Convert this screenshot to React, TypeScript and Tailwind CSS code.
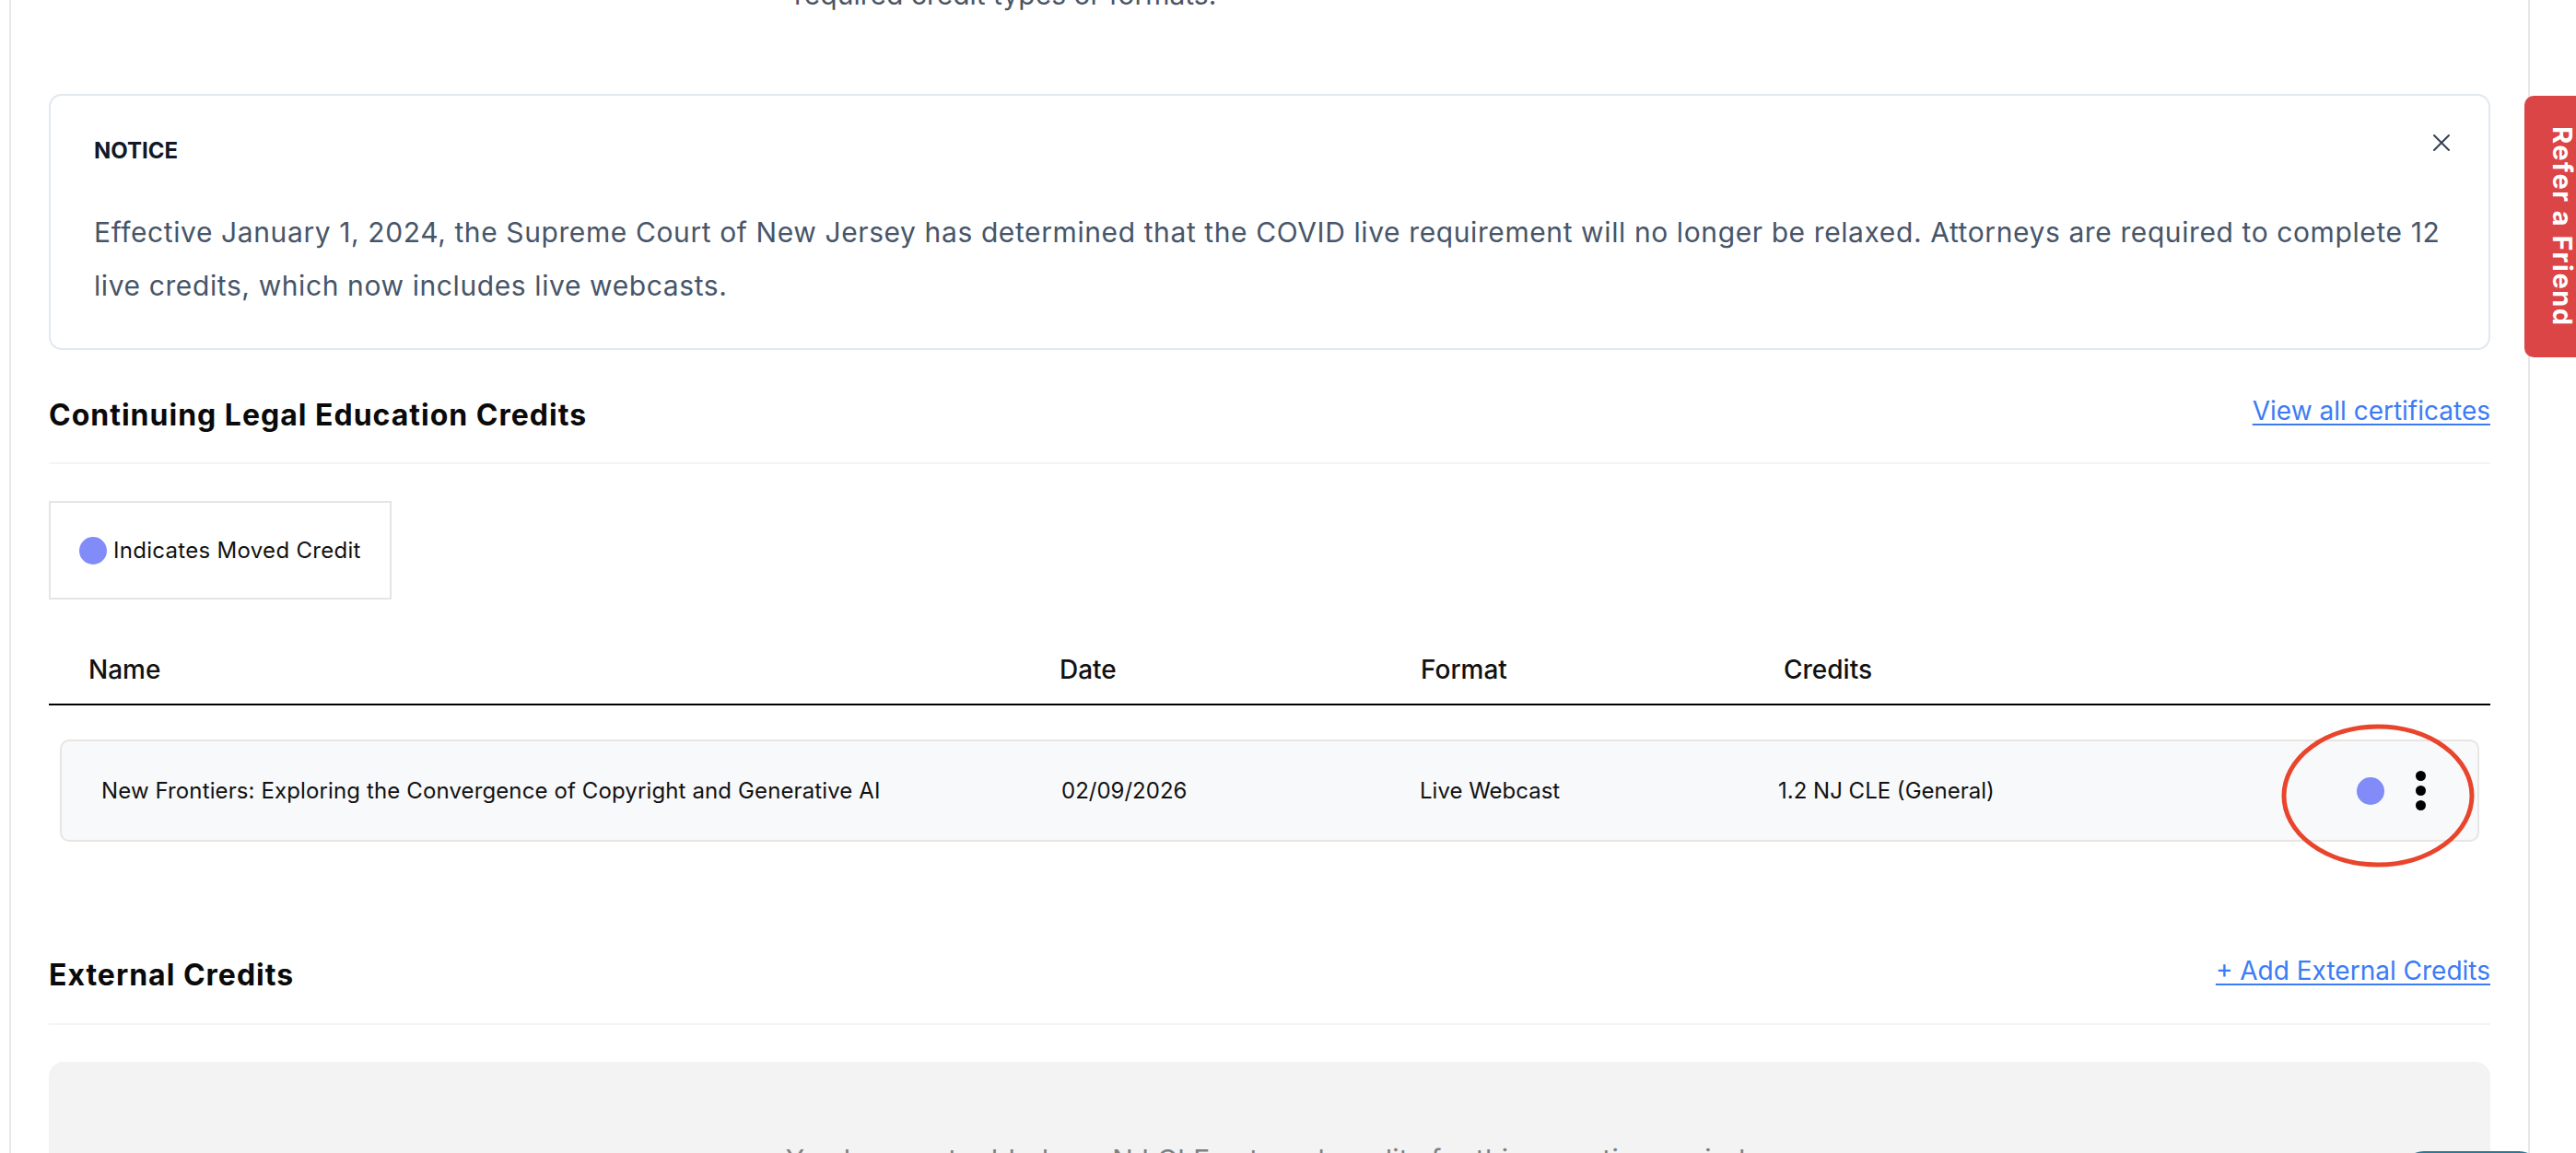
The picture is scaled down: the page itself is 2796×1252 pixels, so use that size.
function CloseIcon() {
  return (
    <svg width="20" height="20" viewBox="0 0 20 20" fill="none" stroke="#334155" strokeWidth="2" strokeLinecap="round">
      <path d="M2 2L18 18M18 2L2 18" />
    </svg>
  );
}

function SectionHeader({ title, link }: { title: string; link: string }) {
  return (
    <div className="flex items-start justify-between">
      <h2 className="text-[32px] font-bold leading-[40px] tracking-[1px] text-[#0a0a0a]">{title}</h2>
      <a
        href="#"
        className="text-[28px] leading-[30px] text-[#3b7cf6] underline decoration-2 underline-offset-[4px]"
      >
        {link}
      </a>
    </div>
  );
}

export default function App() {
  return (
    <div className="relative h-[1252px] w-full overflow-hidden bg-white font-[Inter,sans-serif]">
      <div className="ml-[10px] w-[2736px] border-x-2 border-[#e5e7eb] px-[41px]">
        <div className="h-[12px] overflow-hidden">
          <p className="-mt-[24px] pl-[809px] text-[30px] leading-[36px] text-[#4b5563]">
            required credit types or formats.
          </p>
        </div>

        <section className="mt-[90px] rounded-[14px] border-2 border-[#e2e8f0] pb-[39px] pl-[47px] pr-[41px] pt-[44px]">
          <div className="flex items-start justify-between">
            <p className="text-[24px] font-bold leading-[32px] text-[#111827]">NOTICE</p>
            <button type="button" className="-mt-[3px]">
              <CloseIcon />
            </button>
          </div>
          <p className="mt-[43px] text-[30px] leading-[58px] tracking-[0.6px] text-[#475569]">
            Effective January 1, 2024, the Supreme Court of New Jersey has determined that the COVID live
            requirement will no longer be relaxed. Attorneys are required to complete 12
            <br />
            live credits, which now includes live webcasts.
          </p>
        </section>

        <div className="mt-[51px]">
          <SectionHeader title="Continuing Legal Education Credits" link="View all certificates" />
        </div>
        <div className="mt-[31px] h-[2px] bg-[#f3f4f6]" />

        <div className="mt-[40px] flex h-[107px] w-fit items-center gap-[7px] border-2 border-[#e7e5e4] px-[31px]">
          <span className="h-[30px] w-[30px] rounded-full bg-[#818cf8]" />
          <span className="text-[24px] leading-[32px] tracking-[0.3px] text-[#111]">Indicates Moved Credit</span>
        </div>

        <div className="mt-[58px] grid grid-cols-[1054px_392px_394px_1fr] border-b-2 border-black pb-[19px] pl-[43px] text-[28px] font-medium leading-[36px] text-[#111]">
          <span>Name</span>
          <span>Date</span>
          <span>Format</span>
          <span>Credits</span>
        </div>

        <div className="relative mx-[12px] mt-[37px] flex h-[111px] items-center rounded-[10px] border-2 border-[#e8e5e3] bg-[#f8f9fb] pl-[43px] pr-[56px] text-[24px] leading-[32px] text-[#111]">
          <span className="w-[1042px] tracking-[0.12px]">
            New Frontiers: Exploring the Convergence of Copyright and Generative AI
          </span>
          <span className="w-[389px]">02/09/2026</span>
          <span className="w-[389px]">Live Webcast</span>
          <span className="flex-1">1.2 NJ CLE (General)</span>
          <span className="h-[30px] w-[30px] rounded-full bg-[#818cf8]" />
          <button type="button" className="ml-[34px] flex flex-col gap-[5px]">
            <span className="h-[11px] w-[11px] rounded-full bg-black" />
            <span className="h-[11px] w-[11px] rounded-full bg-black" />
            <span className="h-[11px] w-[11px] rounded-full bg-black" />
          </button>
          <svg
            className="absolute left-[2408px] top-[-20px]"
            width="212"
            height="160"
            viewBox="0 0 212 160"
            fill="none"
          >
            <ellipse cx="106" cy="79" rx="102" ry="75" stroke="#e8452c" strokeWidth="5" />
          </svg>
        </div>

        <div className="mt-[125px]">
          <SectionHeader title="External Credits" link="+ Add External Credits" />
        </div>
        <div className="mt-[32px] h-[2px] bg-[#f3f4f6]" />

        <div className="mt-[40px] h-[300px] rounded-t-[16px] bg-[#f3f3f3] pt-[86px] text-center text-[30px] leading-[40px] tracking-[0.2px] text-[#808080]">
          You have not added any NJ CLE external credits for this reporting period.
        </div>
      </div>

      <div className="absolute left-[2740px] top-[104px] flex h-[284px] w-[82px] items-center justify-center rounded-l-[10px] bg-[#dc4545]">
        <span className="text-[29px] font-bold leading-[30px] tracking-[1.5px] text-white [writing-mode:vertical-rl]">
          Refer a Friend
        </span>
      </div>

      <div className="absolute left-[2607px] top-[1250px] h-[60px] w-[151px] rounded-[24px] bg-[#2c7896]" />
    </div>
  );
}
